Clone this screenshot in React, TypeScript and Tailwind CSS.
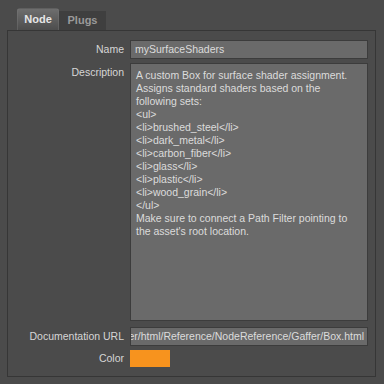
import React from "react";

const description = [
  "A custom Box for surface shader assignment.",
  "Assigns standard shaders based on the",
  "following sets:",
  "<ul>",
  "<li>brushed_steel</li>",
  "<li>dark_metal</li>",
  "<li>carbon_fiber</li>",
  "<li>glass</li>",
  "<li>plastic</li>",
  "<li>wood_grain</li>",
  "</ul>",
  "Make sure to connect a Path Filter pointing to",
  "the asset's root location.",
];

function Label({ children, className = "" }: { children: React.ReactNode; className?: string }) {
  return (
    <div className={`w-[117px] shrink-0 pr-[1px] text-right text-[#d6d6d6] ${className}`}>
      {children}
    </div>
  );
}

export default function App() {
  return (
    <div
      className="w-[384px] h-[384px] bg-[#4b4b4b] pt-[8px] text-[10.5px] overflow-hidden"
      style={{ fontFamily: '"Liberation Sans", Arial, sans-serif' }}
    >
      {/* Tabs */}
      <div className="flex items-end pl-[17px] h-[22px]">
        <div className="w-[42px] h-[22px] rounded-t-[3px] bg-gradient-to-b from-[#6e6e6e] to-[#4d4d4d] border-t border-x border-[#7a7a7a]/40 flex items-center justify-center font-bold text-[#e6e6e6] text-[11px]">
          Node
        </div>
        <div className="w-[47px] h-[19px] bg-[#3f3f3f] flex items-center justify-center font-bold text-[#9a9a9a] text-[11px]">
          Plugs
        </div>
      </div>

      {/* Panel */}
      <div className="ml-[7px] w-[369px] h-[347px] border border-[#363636] pt-[9px] pr-[7px] flex flex-col">
        <div className="flex items-center h-[19px]">
          <Label>Name</Label>
          <div className="ml-[5px] flex-1 h-[19px] bg-[#6a6a6a] border border-[#3c3c3c] px-[4px] flex items-center text-[#dcdcdc]">
            mySurfaceShaders
          </div>
        </div>

        <div className="flex mt-[4px] h-[258px]">
          <Label className="pt-[2px]">Description</Label>
          <div className="ml-[5px] flex-1 bg-[#6a6a6a] border border-[#3c3c3c] px-[5px] pt-[5px] text-[#dcdcdc] leading-[13px]">
            {description.map((line, i) => (
              <div key={i} className="whitespace-nowrap">
                {line}
              </div>
            ))}
          </div>
        </div>

        <div className="flex items-center mt-[6px] h-[19px]">
          <Label>Documentation URL</Label>
          <div className="ml-[5px] flex-1 min-w-0 h-[19px] bg-[#6a6a6a] border border-[#3c3c3c] pr-[3px] flex items-center justify-end overflow-hidden text-[#dcdcdc]">
            <span className="whitespace-nowrap">er/html/Reference/NodeReference/Gaffer/Box.html</span>
          </div>
        </div>

        <div className="flex items-center mt-[4px] h-[17px]">
          <Label>Color</Label>
          <div className="ml-[5px] w-[40px] h-[17px] bg-[#f7931e]" />
        </div>
      </div>
    </div>
  );
}
